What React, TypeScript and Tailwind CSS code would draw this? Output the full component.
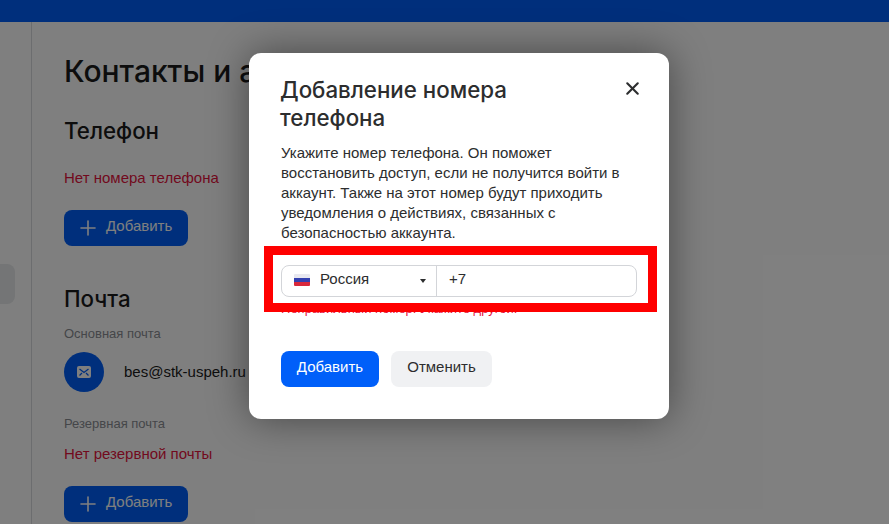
import { X, Plus } from "lucide-react";

const bodyFont = "font-['Liberation_Sans',Arial,sans-serif]";
const headFont = "font-['Inter','Noto_Sans',sans-serif]";

const AddButton = () => (
  <button className="flex h-9 w-[124px] items-center rounded-lg bg-[#005ff9] pb-[4px] pl-3 text-[15px] text-white">
    <Plus size={24} strokeWidth={1.6} className="mt-[4px]" />
    <span className="ml-[6px]">Добавить</span>
  </button>
);

const Flag = () => (
  <span className="flex h-3 w-4 flex-col overflow-hidden rounded-[1px]">
    <span className="h-1 bg-[#e8e8f0]"></span>
    <span className="h-1 bg-[#3340b0]"></span>
    <span className="h-1 bg-[#d8283c]"></span>
  </span>
);

const Page = () => (
  <div className="flex min-h-0 flex-1">
    <aside className="w-8 shrink-0 border-r border-[#d8dade] pt-[242px]">
      <div className="h-10 w-[15px] rounded-r-lg bg-[#e8eaec]"></div>
    </aside>
    <main className="flex-1 pl-[32px] pt-[29px] text-[#1a1a1a]">
      <h1 className={`${headFont} text-[30px] leading-[40px] font-medium`}>Контакты и адреса</h1>
      <h2 className={`${headFont} mt-[24px] text-[22.3px] leading-[32px] font-medium`}>Телефон</h2>
      <p className="mt-[21px] text-[15px] leading-5 text-[#e5133d]">Нет номера телефона</p>
      <div className="mt-[22px]">
        <AddButton />
      </div>
      <h2 className={`${headFont} mt-[37px] text-[22.3px] leading-[32px] font-medium`}>Почта</h2>
      <p className="mt-[11px] text-[13px] leading-4 text-[#8a8d93]">Основная почта</p>
      <div className="mt-[10px] flex items-center">
        <span className="flex size-10 items-center justify-center rounded-full bg-[#005ff9]">
          <svg width="14" height="12" viewBox="0 0 14 12">
            <rect width="14" height="12" rx="2" fill="#fff" />
            <path d="M2.5 3 7 6.5 11.5 3M2.5 9.5 5 7M11.5 9.5 9 7" fill="none" stroke="#005ff9" strokeWidth="1.3" />
          </svg>
        </span>
        <span className="ml-5 text-[15px]">bes@stk-uspeh.ru</span>
      </div>
      <p className="mt-[24px] text-[13px] leading-4 text-[#8a8d93]">Резервная почта</p>
      <p className="mt-[12px] text-[15px] leading-5 text-[#e5133d]">Нет резервной почты</p>
      <div className="mt-[22px]">
        <AddButton />
      </div>
    </main>
  </div>
);

const Modal = () => (
  <div className="absolute left-[249px] top-[53px] h-[366px] w-[420px] rounded-xl bg-white px-8 pt-[23px] shadow-[0_0_40px_rgba(0,0,0,0.45)]">
    <div className="flex justify-between">
      <h3 className={`${headFont} ml-[-1px] w-[300px] text-[22.3px] leading-[28px] font-medium text-[#2c2d2e]`}>
        Добавление номера телефона
      </h3>
      <X size={21} strokeWidth={2.4} className="mr-[-6px] mt-[2px] text-[#2c2d2e]" />
    </div>
    <p className="mt-[11px] w-[356px] text-[15px] leading-5 text-[#2c2d2e]">
      Укажите номер телефона. Он поможет восстановить доступ, если не получится войти в аккаунт. Также на этот номер будут приходить уведомления о действиях, связанных с безопасностью аккаунта.
    </p>
    <div className="mt-[22px] flex h-8 w-[356px] rounded-lg border border-[#d3d5d9] text-[15px] text-[#2c2d2e]">
      <div className="flex w-[155px] items-center border-r border-[#d3d5d9] pb-[3px] pl-3">
        <Flag />
        <span className="ml-[10px]">Россия</span>
        <span className="ml-auto mr-[10px] mt-[3px] size-0 border-x-[3px] border-t-[4px] border-x-transparent border-t-[#2c2d2e]"></span>
      </div>
      <span className="flex items-center pb-[3px] pl-3">+7</span>
    </div>
    <p className="mt-[4px] text-[13px] leading-4 text-[#e5133d]">Неправильный номер. Укажите другой.</p>
    <div className="mt-[34px] flex gap-3">
      <button className="h-9 w-[98px] rounded-lg bg-[#005ff9] pb-[4px] text-[15px] text-white">Добавить</button>
      <button className="h-9 w-[101px] rounded-lg bg-[#f0f1f3] pb-[4px] text-[15px] text-[#2c2d2e]">Отменить</button>
    </div>
  </div>
);

export default function App() {
  return (
    <div className={`${bodyFont} relative flex h-[524px] w-[889px] flex-col overflow-hidden bg-white`}>
      <div className="h-[22px] shrink-0 bg-[#005ff9]"></div>
      <Page />
      <div className="absolute inset-0 bg-black/50"></div>
      <Modal />
      {/* red marker drawn over the screenshot */}
      <div className="absolute left-[264px] top-[246px] h-[66px] w-[393px] border-[9px] border-[#ff0000]"></div>
    </div>
  );
}
